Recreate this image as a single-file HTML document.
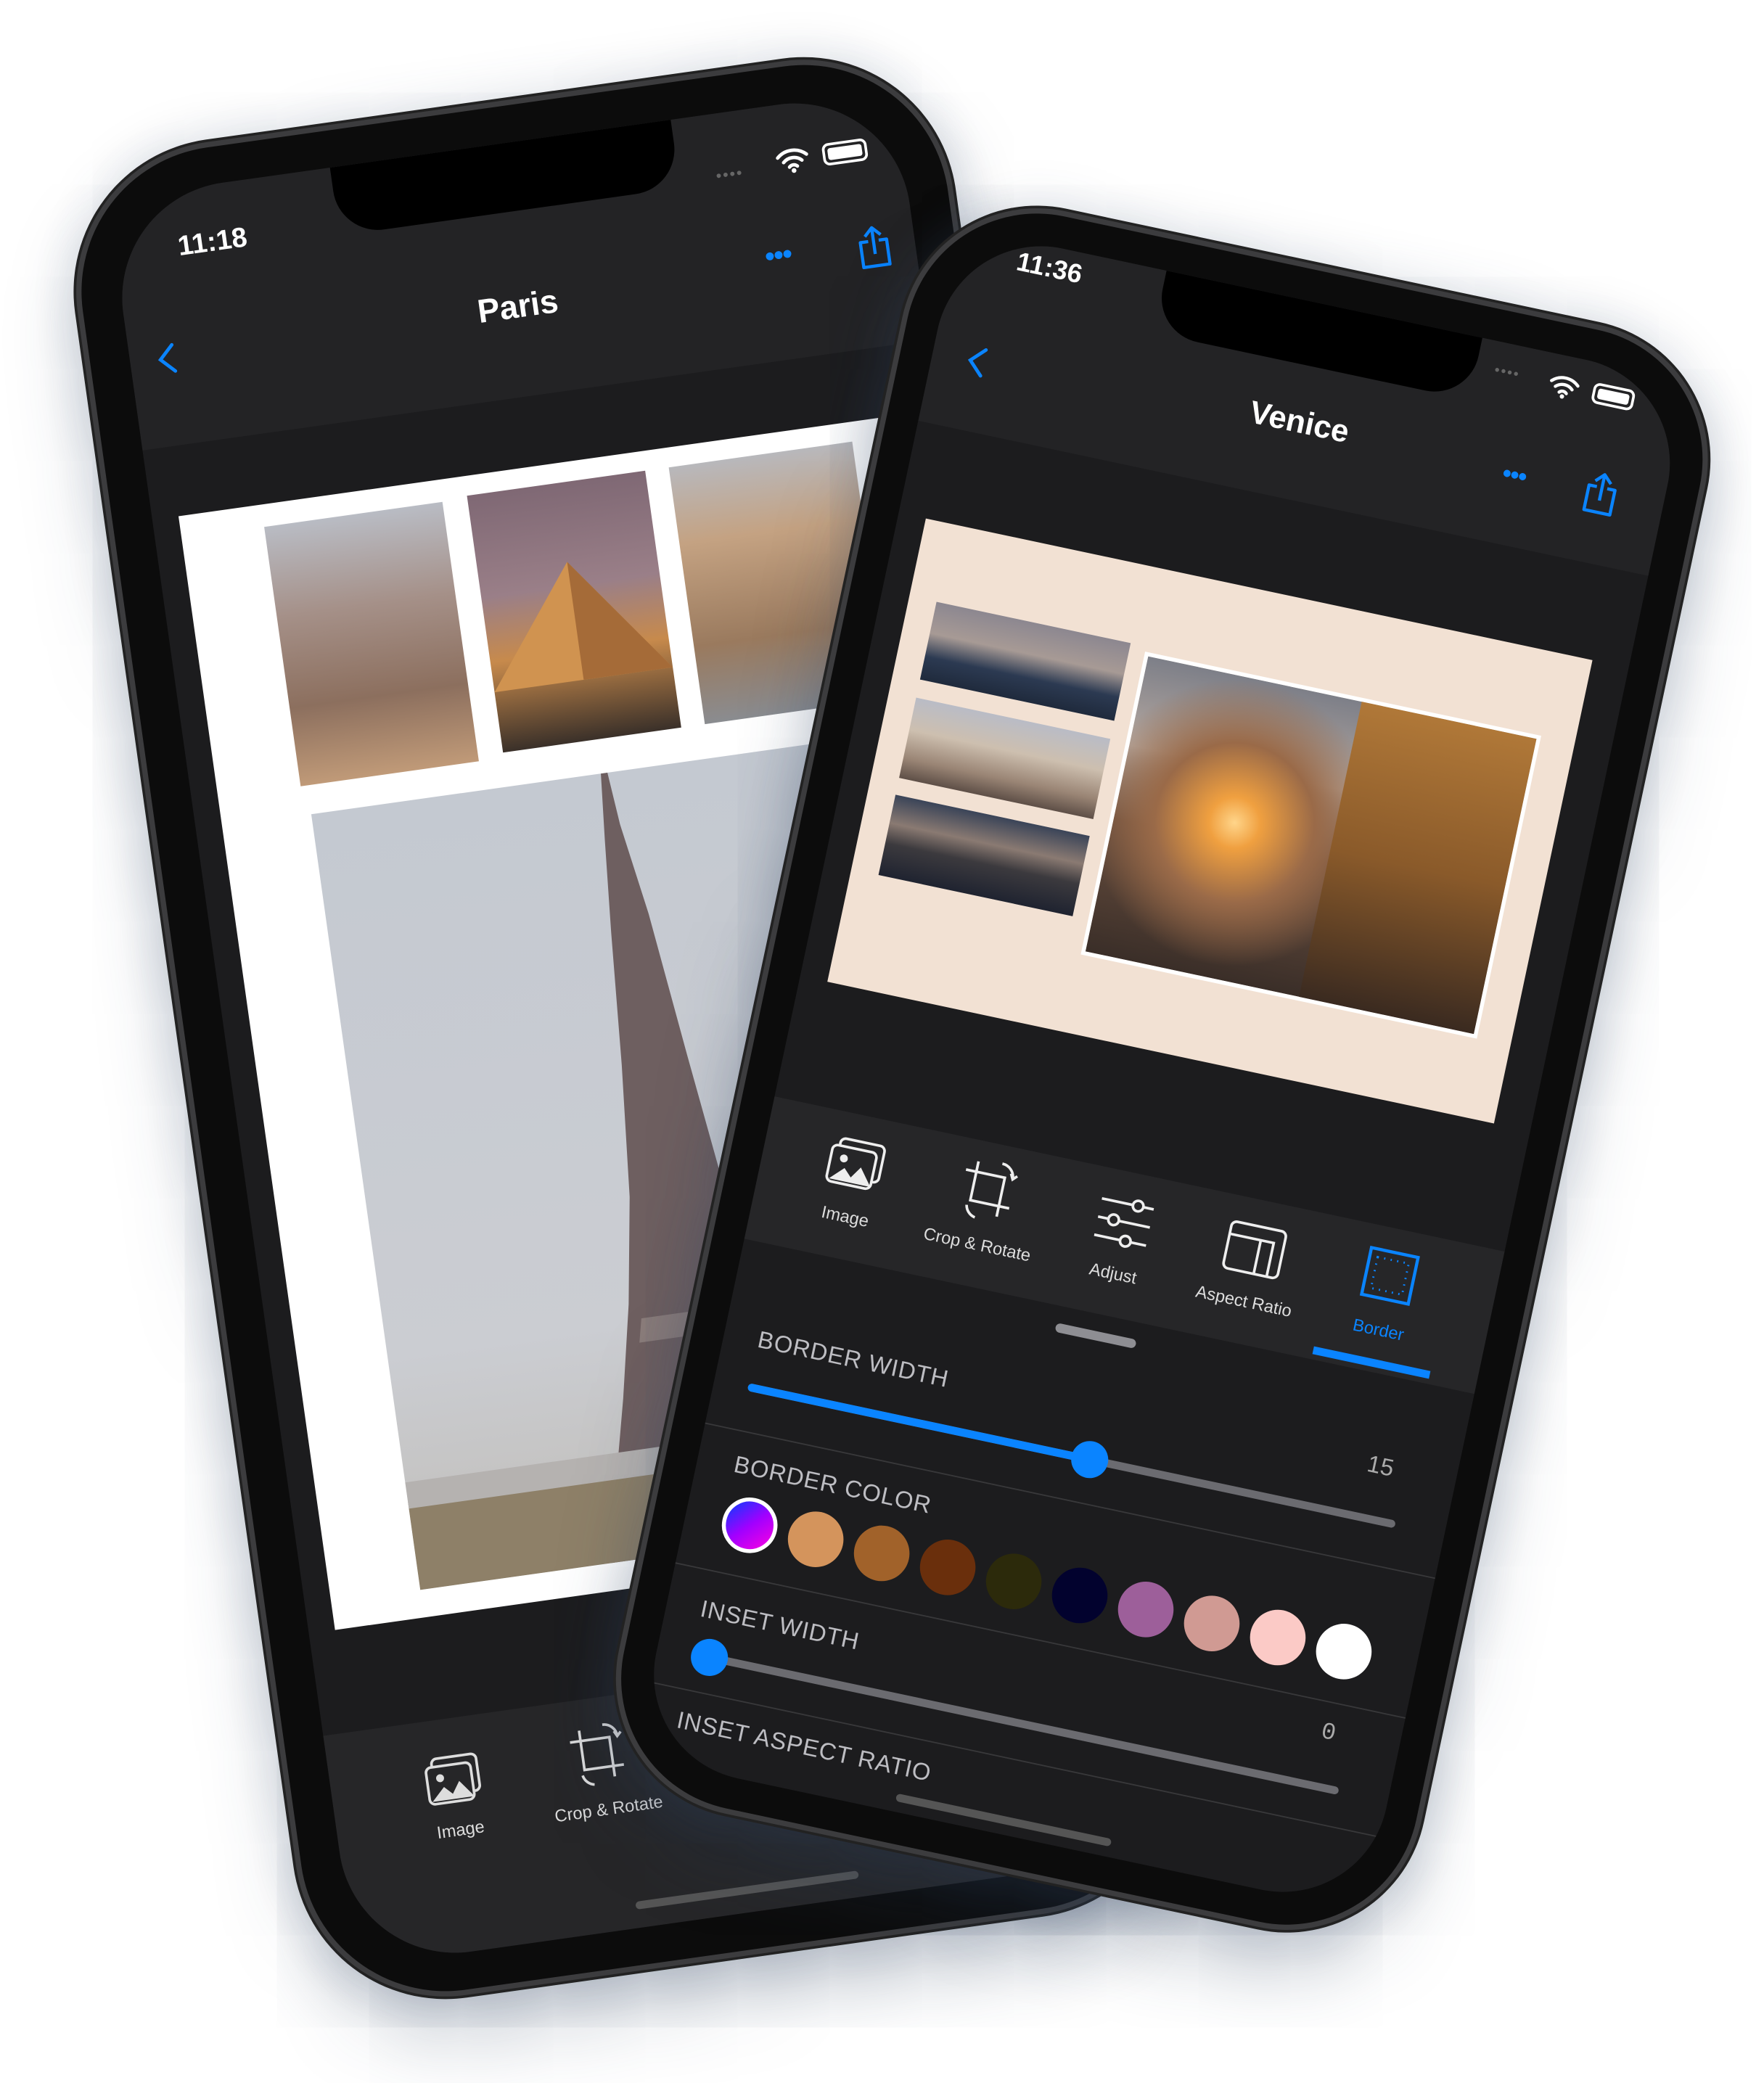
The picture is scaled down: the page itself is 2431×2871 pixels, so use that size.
<!DOCTYPE html>
<html><head><meta charset="utf-8">
<style>
*{box-sizing:border-box;margin:0;padding:0}
html,body{width:2431px;height:2871px;overflow:hidden;background:#fff;font-family:"Liberation Sans",sans-serif}
#root{position:absolute;left:0;top:0;width:1333px;height:1574px;transform:scale(1.8237);transform-origin:0 0}
.phone{position:absolute;border-radius:110px;background:#0c0c0c;box-shadow:0 0 0 4px #3c3c3e,0 0 0 6px #222,0 30px 60px rgba(40,60,90,.35),0 0 40px rgba(60,80,110,.25)}
.screen{position:absolute;overflow:hidden;background:#1c1c1e;border-radius:88px}
.abs{position:absolute}
.notch{position:absolute;background:#000;border-radius:0 0 34px 34px}
.blue{color:#0a84ff}
.lbl{position:absolute;color:#ddd;font-size:13px;text-align:center;width:110px}
.cap{position:absolute;color:#bdbdc2;font-size:18px;letter-spacing:.5px}
.dot{position:absolute;width:42px;height:42px;border-radius:50%}
</style></head><body><div id="root">

<!-- PHONE 1 -->
<div class="phone" style="left:142px;top:74px;width:660px;height:1406px;transform:rotate(-8deg)">
 <div class="screen" style="left:30px;top:28px;width:600px;height:1350px">
  <div class="abs" style="left:0;top:0;width:600px;height:192px;background:#232325"></div>
  <div class="notch" style="left:170px;top:0;width:260px;height:52px"></div>
  <div class="abs" style="left:48px;top:32px;color:#fff;font-size:21px;font-weight:bold">11:18</div>
  <div class="abs" style="left:458px;top:40px;color:#666;font-size:12px;letter-spacing:1px">••••</div>
  <svg class="abs" style="left:504px;top:33px" width="26" height="20" viewBox="0 0 26 20"><path d="M2 7a16 16 0 0 1 22 0M6 11a10 10 0 0 1 14 0M10 15a4 4 0 0 1 6 0" stroke="#fff" stroke-width="2.6" fill="none" stroke-linecap="round"/><circle cx="13" cy="18" r="1.8" fill="#fff"/></svg>
  <div class="abs" style="left:540px;top:34px;width:34px;height:17px;border:2px solid #fff;border-radius:5px;padding:2px"><div style="background:#fff;width:100%;height:100%;border-radius:2px"></div></div>
  <div class="abs" style="left:-4px;top:110px;width:600px;text-align:center;color:#fff;font-size:25px;font-weight:bold">Paris</div>
  <svg class="abs" style="left:20px;top:113px" width="16" height="26"><path d="M13 3L3 13l10 10" stroke="#0a84ff" stroke-width="2.6" fill="none" stroke-linecap="round"/></svg>
  <div class="abs blue" style="left:486px;top:100px;font-size:22px;letter-spacing:-1px">•••</div>
  <svg class="abs" style="left:556px;top:100px" width="26" height="34" viewBox="0 0 26 34"><path d="M9 12H3v19h20V12h-6M13 22V2M7 8l6-6 6 6" stroke="#0a84ff" stroke-width="2.4" fill="none" stroke-linejoin="round"/></svg>
  <!-- canvas -->
  <div class="abs" style="left:20px;top:245px;width:600px;height:850px;background:#fff"></div>
  <div class="abs" style="left:83px;top:262px;width:136px;height:198px;background:linear-gradient(180deg,#b9bcc4 0%,#a59088 35%,#8c6f5e 70%,#c09a78 100%)"></div>
  <div class="abs" style="left:238px;top:260px;width:136px;height:196px;background:linear-gradient(180deg,#7f6874 0%,#9a7f88 40%,#c78a4c 65%,#3a3029 100%)">
   <svg width="136" height="196"><polygon points="68,60 0,150 136,150" fill="#d09350"/><polygon points="68,60 68,150 136,150" fill="#a56b38"/></svg></div>
  <div class="abs" style="left:392px;top:260px;width:140px;height:196px;background:linear-gradient(180deg,#b8b8bc 0%,#c4a282 30%,#9a7a5e 70%,#8a8c90 100%)"></div>
  <div class="abs" style="left:88px;top:482px;width:520px;height:592px;background:linear-gradient(180deg,#c4c9d1 0%,#cbcdd2 70%,#c0bdb8 100%)">
   <svg width="520" height="592" viewBox="0 0 520 592"><path d="M221 0 L217 50 L212 120 L206 220 L198 320 L186 400 L172 470 L156 540 L146 592 L340 592 L310 530 L290 450 L272 340 L256 220 L242 110 L230 40 L226 0 Z" fill="#6e5f60"/><path d="M190 430 L300 430 L296 412 L194 412 Z" fill="#8a7c7a"/><rect x="0" y="525" width="520" height="67" fill="#8e8068"/><rect x="0" y="510" width="200" height="20" fill="#b5b2b0"/></svg></div>
  <div class="abs" style="left:0;top:1173px;width:600px;height:177px;background:#262628"></div>
  <svg class="abs" style="left:70px;top:1200px" width="46" height="40" viewBox="0 0 46 40"><rect x="8" y="2" width="34" height="28" rx="4" stroke="#ddd" stroke-width="2" fill="none"/><rect x="3" y="8" width="34" height="28" rx="4" stroke="#ddd" stroke-width="2" fill="#262628"/><circle cx="13" cy="17" r="3" fill="#ddd"/><path d="M5 34l10-10 6 6 6-9 10 13z" fill="#ddd"/></svg>
  <div class="lbl" style="left:38px;top:1250px">Image</div>
  <svg class="abs" style="left:182px;top:1192px" width="44" height="48" viewBox="0 0 44 48"><path d="M10 4v30h30M2 12h30v30" stroke="#ddd" stroke-width="2" fill="none"/><path d="M28 2a10 10 0 0 1 10 10M36 8l2 4 3-3M8 38a10 10 0 0 0 8 8" stroke="#ddd" stroke-width="2" fill="none"/></svg>
  <div class="lbl" style="left:151px;top:1250px">Crop &amp; Rotate</div>
  <div class="abs" style="left:216px;top:1330px;width:170px;height:6px;border-radius:3px;background:#555"></div>
 </div>
</div>

<!-- PHONE 2 -->
<div class="phone" style="left:572px;top:193px;width:612px;height:1230px;transform:rotate(12deg);border-radius:100px">
 <div class="screen" style="left:24px;top:24px;width:564px;height:1182px;border-radius:80px">
  <div class="abs" style="left:0;top:0;width:564px;height:150px;background:#232325"></div>
  <div class="notch" style="left:160px;top:0;width:244px;height:48px"></div>
  <div class="abs" style="left:48px;top:6px;color:#fff;font-size:20px;font-weight:bold">11:36</div>
  <div class="abs" style="left:418px;top:16px;color:#666;font-size:11px;letter-spacing:1px">••••</div>
  <svg class="abs" style="left:460px;top:14px" width="24" height="19" viewBox="0 0 26 20"><path d="M2 7a16 16 0 0 1 22 0M6 11a10 10 0 0 1 14 0M10 15a4 4 0 0 1 6 0" stroke="#fff" stroke-width="2.6" fill="none" stroke-linecap="round"/><circle cx="13" cy="18" r="1.8" fill="#fff"/></svg>
  <div class="abs" style="left:494px;top:15px;width:32px;height:16px;border:2px solid #fff;border-radius:5px;padding:2px"><div style="background:#fff;width:100%;height:100%;border-radius:2px"></div></div>
  <div class="abs" style="left:0;top:78px;width:564px;text-align:center;color:#fff;font-size:24px;font-weight:bold">Venice</div>
  <svg class="abs" style="left:26px;top:84px" width="16" height="26"><path d="M13 3L3 13l10 10" stroke="#0a84ff" stroke-width="2.6" fill="none" stroke-linecap="round"/></svg>
  <div class="abs blue" style="left:440px;top:86px;font-size:20px;letter-spacing:-1px">•••</div>
  <svg class="abs" style="left:503px;top:80px" width="26" height="34" viewBox="0 0 26 34"><path d="M9 12H3v19h20V12h-6M13 22V2M7 8l6-6 6 6" stroke="#0a84ff" stroke-width="2.4" fill="none" stroke-linejoin="round"/></svg>
  <!-- canvas -->
  <div class="abs" style="left:21px;top:221px;width:515px;height:358px;background:#f2e1d3"></div>
  <div class="abs" style="left:42px;top:281px;width:150px;height:60px;background:linear-gradient(180deg,#8c8790 0%,#a79a95 40%,#2c3a52 70%,#1f2a3c 100%)"></div>
  <div class="abs" style="left:42px;top:355px;width:150px;height:62px;background:linear-gradient(180deg,#b9bcc6 0%,#cdbfaf 40%,#9a8575 75%,#5e4f47 100%)"></div>
  <div class="abs" style="left:42px;top:430px;width:150px;height:62px;background:linear-gradient(180deg,#3a4458 0%,#8a7a72 35%,#3c3a3e 60%,#1f2330 100%)"></div>
  <div class="abs" style="left:204px;top:285px;width:306px;height:234px;border:3px solid #fff;background:radial-gradient(circle at 30% 48%,#ffd58a 0,#f0a040 8%,#9a6a48 25%,transparent 45%),linear-gradient(180deg,#7d7f88 0%,#b5a8a0 30%,#6b5040 55%,#3a2e28 100%)">
   <div class="abs" style="right:0;top:0;width:45%;height:100%;background:linear-gradient(180deg,#b07838 0%,#8a5a2a 50%,#3a2a20 100%)"></div></div>
  <!-- toolbar -->
  <div class="abs" style="left:0;top:672px;width:564px;height:110px;background:#262628"></div>
  <svg class="abs" style="left:48px;top:690px" width="46" height="40" viewBox="0 0 46 40"><rect x="8" y="2" width="34" height="28" rx="4" stroke="#eee" stroke-width="2" fill="none"/><rect x="3" y="8" width="34" height="28" rx="4" stroke="#eee" stroke-width="2" fill="#262628"/><circle cx="13" cy="17" r="3" fill="#eee"/><path d="M5 34l10-10 6 6 6-9 10 13z" fill="#eee"/></svg>
  <div class="lbl" style="left:16px;top:742px">Image</div>
  <svg class="abs" style="left:151px;top:684px" width="44" height="48" viewBox="0 0 44 48"><path d="M10 4v30h30M2 12h30v30" stroke="#eee" stroke-width="2" fill="none"/><path d="M28 2a10 10 0 0 1 10 10M36 8l2 4 3-3M8 38a10 10 0 0 0 8 8" stroke="#eee" stroke-width="2" fill="none"/></svg>
  <div class="lbl" style="left:118px;top:742px">Crop &amp; Rotate</div>
  <svg class="abs" style="left:256px;top:690px" width="44" height="40" viewBox="0 0 44 40"><path d="M2 6h40M2 20h40M2 34h40" stroke="#eee" stroke-width="2"/><circle cx="30" cy="6" r="4" fill="#262628" stroke="#eee" stroke-width="2"/><circle cx="14" cy="20" r="4" fill="#262628" stroke="#eee" stroke-width="2"/><circle cx="26" cy="34" r="4" fill="#262628" stroke="#eee" stroke-width="2"/></svg>
  <div class="lbl" style="left:223px;top:742px">Adjust</div>
  <svg class="abs" style="left:356px;top:690px" width="46" height="40" viewBox="0 0 46 40"><rect x="2" y="2" width="42" height="36" rx="4" stroke="#eee" stroke-width="2" fill="none"/><path d="M2 12h34v26M26 12v26" stroke="#eee" stroke-width="2" fill="none"/></svg>
  <div class="lbl" style="left:324px;top:742px">Aspect Ratio</div>
  <svg class="abs" style="left:463px;top:688px" width="40" height="40" viewBox="0 0 40 40"><rect x="2" y="2" width="36" height="36" stroke="#0a84ff" stroke-width="2.4" fill="none"/><rect x="8" y="8" width="24" height="24" stroke="#0a84ff" stroke-width="1.6" stroke-dasharray="1 4" fill="none"/></svg>
  <div class="lbl blue" style="left:428px;top:742px;color:#0a84ff">Border</div>
  <div class="abs" style="left:438px;top:772px;width:90px;height:6px;background:#0a84ff"></div>
  <!-- panel -->
  <div class="abs" style="left:244px;top:795px;width:62px;height:7px;border-radius:4px;background:#8e8e93"></div>
  <div class="cap" style="left:26px;top:844px">BORDER WIDTH</div>
  <div class="abs" style="left:26px;top:888px;width:500px;height:6px;border-radius:3px;background:#6b6b70"></div>
  <div class="abs" style="left:26px;top:888px;width:264px;height:6px;border-radius:3px;background:#0a84ff"></div>
  <div class="abs" style="left:276px;top:877px;width:28px;height:28px;border-radius:50%;background:#0a84ff"></div>
  <div class="abs" style="left:496px;top:840px;color:#aaa;font-size:18px">15</div>
  <div class="abs" style="left:0;top:924px;width:564px;height:1px;background:#38383a"></div>
  <div class="cap" style="left:28px;top:940px">BORDER COLOR</div>
  <div class="dot" style="left:28px;top:972px;border:3px solid #fff;background:linear-gradient(135deg,#0040ff,#a000ff,#ff00e0)"></div>
  <div class="dot" style="left:79px;top:972px;background:#d4945c"></div>
  <div class="dot" style="left:130px;top:972px;background:#a1622a"></div>
  <div class="dot" style="left:181px;top:972px;background:#6a2f0c"></div>
  <div class="dot" style="left:232px;top:972px;background:#2c2a0b"></div>
  <div class="dot" style="left:283px;top:972px;background:#02022e"></div>
  <div class="dot" style="left:334px;top:972px;background:#9d5f9a"></div>
  <div class="dot" style="left:385px;top:972px;background:#d09a93"></div>
  <div class="dot" style="left:436px;top:972px;background:#fbcac6"></div>
  <div class="dot" style="left:487px;top:972px;background:#fff"></div>
  <div class="abs" style="left:0;top:1032px;width:564px;height:1px;background:#38383a"></div>
  <div class="cap" style="left:26px;top:1052px">INSET WIDTH</div>
  <div class="abs" style="left:30px;top:1094px;width:496px;height:6px;border-radius:3px;background:#6b6b70"></div>
  <div class="abs" style="left:26px;top:1083px;width:28px;height:28px;border-radius:50%;background:#0a84ff"></div>
  <div class="abs" style="left:504px;top:1046px;color:#aaa;font-size:18px;font-family:'Liberation Mono',monospace">0</div>
  <div class="abs" style="left:0;top:1124px;width:564px;height:1px;background:#38383a"></div>
  <div class="cap" style="left:26px;top:1138px">INSET ASPECT RATIO</div>
  <div class="abs" style="left:200px;top:1168px;width:166px;height:6px;border-radius:3px;background:#555"></div>
 </div>
</div>

</div></body></html>
